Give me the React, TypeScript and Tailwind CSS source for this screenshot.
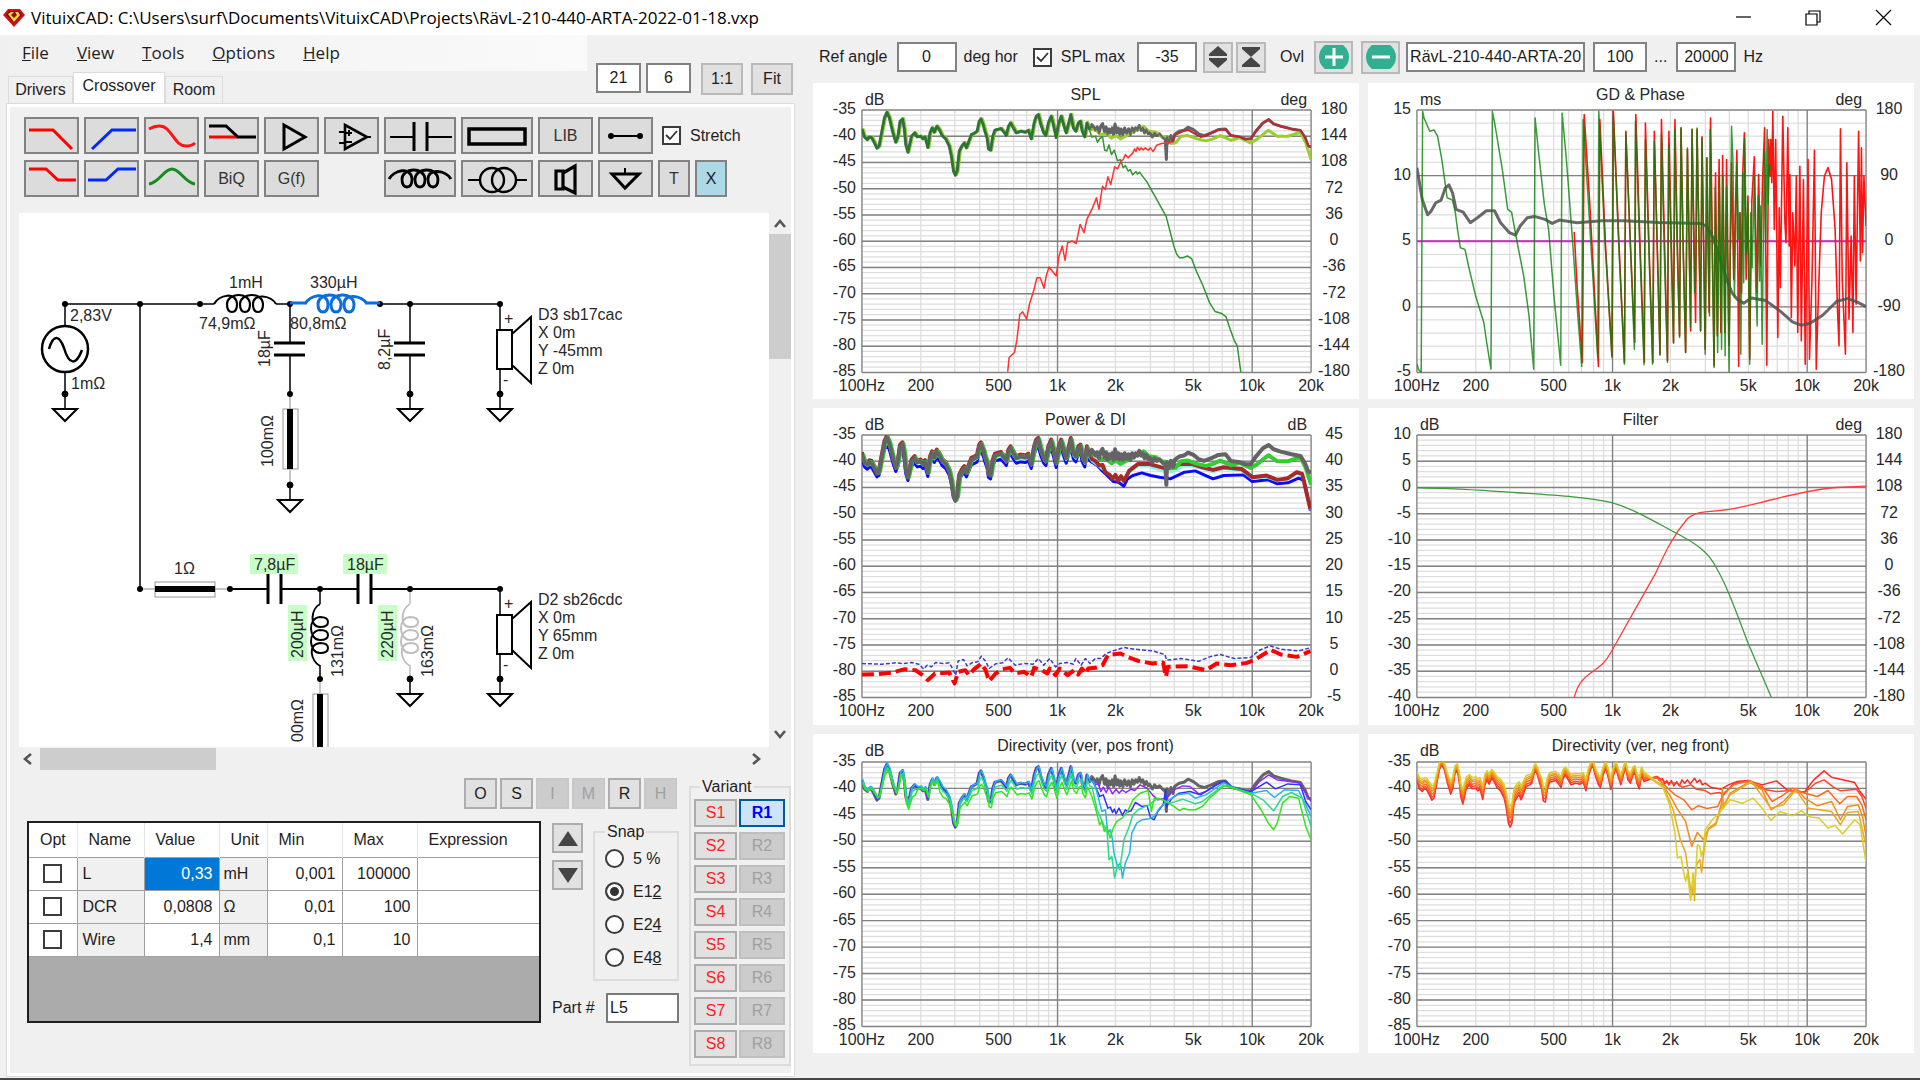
import { useState, type ReactNode } from "react";

type Point = [number, number];

interface Series {
  d: string;
  color: string;
  width?: number;
  dash?: string;
  opacity?: number;
}

interface ChartProps {
  title: string;
  leftUnit: string;
  rightUnit?: string;
  left: number[];
  right?: number[];
  minor: number;
  tall?: boolean;
  box: string;
  series: Series[];
}

// Low frequency part that every on-axis response shares
const BASS =
  "145 148 152 172 160 180 166 172 172 174 180 190 187 206 193 200 200 160 208 115 215 98 222 115 232 160 240 188 246 170 252 125 259 118 264 150 268 195 274 218 280 190 284 170 293 160 300 172 310 170 316 178 322 172 330 204 336 160 342 145 348 158 355 140 362 150 370 168 380 178 390 200 396 230 402 275 407 287 412 275 418 215 425 200 432 190 438 205 445 185 452 165 462 160 468 155 474 125 479 118 485 135 490 155 496 175 500 208 506 212 512 170 518 152 535 147 545 160 550 168 556 140 562 130 570 145 578 160 590 155 604 158 612 152 620 178 628 130 634 110 640 105 647 135 655 160 661 168 668 130 676 110 682 135 690 174 696 135 704 110 712 140 718 160 724 135 731 105 738 145 745 155 752 130 758 125 763 155 770 172 776 130 783 150";

const TREBLE =
  "785 150 790 135 795 142 800 152 805 142 810 160 815 140 820 132 826 158 830 142 834 165 838 148 842 160 847 145 851 165 855 133 860 160 864 145 868 164 872 148 877 165 882 145 888 162 893 148 898 165 903 145 908 158 913 145 918 152 923 138 928 152 933 145 938 160 943 150 948 162 952 158 960 172 966 160 972 168 980 163 990 175 996 178 999 240 1001 172 1006 190 1012 168 1018 186 1022 165 1035 155 1048 152 1060 143 1075 150 1090 163 1105 168 1125 160 1145 150 1165 148 1180 168 1205 172 1220 178 1236 178 1250 155 1270 130 1286 120 1300 133 1320 140 1350 148 1375 153 1388 175 1397 200 1405 202";

const LISTENING =
  "785 150 800 150 815 165 830 162 845 176 858 168 870 178 885 170 900 160 915 152 935 140 950 155 970 158 985 170 1000 172 1012 192 1025 190 1040 170 1060 168 1085 178 1110 184 1130 178 1150 168 1180 182 1205 175 1235 190 1255 178 1285 152 1310 170 1340 170 1375 158 1390 190 1405 240";

const parse = (s: string): Point[] => {
  const n = s.split(" ").map(Number);
  const out: Point[] = [];
  for (let i = 0; i < n.length; i += 2) out.push([n[i], n[i + 1]]);
  return out;
};

const line = (...parts: string[]) => "M" + parts.join(" L");

// Moves a trace, drops it by `sag` above the 400 Hz area and scales its ripple by `gain`
const shift = (s: string, dx: number, dy: number, sag = 0, gain = 1) =>
  parse(s)
    .map(([x, y]) => {
      const extra = x > 360 || (x > 260 && x < 300) ? sag : 0;
      return `${x + dx} ${Math.round(150 + (y - 150) * gain) + dy + extra}`;
    })
    .join(" ");

const range = (from: number, to: number, step: number) => {
  const out: number[] = [];
  for (let v = from; step > 0 ? v <= to : v >= to; v += step) out.push(v);
  return out;
};

const DB = range(-35, -85, -5);
const DEG = range(180, -180, -36);
const FREQ: [number, string][] = [
  [100, "100Hz"],
  [200, "200"],
  [500, "500"],
  [1000, "1k"],
  [2000, "2k"],
  [5000, "5k"],
  [10000, "10k"],
  [20000, "20k"],
];
const FREQ_LINES = [...range(200, 900, 100), ...range(2000, 9000, 1000)];

const CHARTS: ChartProps[] = [
  {
    title: "SPL",
    leftUnit: "dB",
    rightUnit: "deg",
    left: DB,
    right: DEG,
    minor: 50,
    box: "145 91 1260 789",
    series: [
      { d: line(shift(TREBLE, 0, 0)), color: "#646464", width: 3 },
      { d: line(shift(BASS, 3, -1), LISTENING), color: "#9acd32", width: 3 },
      { d: line(BASS), color: "#646464", width: 3 },
      { d: line(TREBLE), color: "#646464", width: 2 },
      { d: line(BASS), color: "#1e7d28", width: 2 },
      {
        d: line(
          "783 150 790 172 800 170 806 188 813 176 820 172 826 212 832 214 838 196 845 225 853 212 862 244 870 240 878 265 884 258 892 275 898 270 904 286 914 276 918 284 924 278 932 290 945 308 956 330 968 352 985 385 998 410 1008 450 1020 500 1028 525 1036 535 1046 535 1058 530 1070 538 1085 580 1102 620 1120 670 1136 697 1152 702 1166 712 1178 750 1190 785 1198 800 1208 880"
        ),
        color: "#329632",
        width: 1.5,
      },
      {
        d: line(
          "554 878 558 835 573 820 580 780 588 705 596 698 607 720 615 675 628 630 636 595 645 595 656 627 662 590 670 563 690 590 698 530 707 500 715 543 722 490 735 485 746 493 757 435 768 460 776 420 790 390 803 355 810 390 820 320 828 330 835 292 843 315 854 262 862 268 872 245 878 240 884 225 892 235 905 220 910 208 914 216 918 203 924 212 928 205 934 211 940 205 948 212 954 205 962 216 972 197 985 192 1000 190 1013 188"
        ),
        color: "#ff3232",
        width: 1.5,
      },
      {
        d: line(
          "1013 188 1025 165 1045 155 1060 151 1080 163 1095 172 1107 170 1125 161 1145 151 1165 149 1180 168 1205 172 1220 180 1236 177 1250 155 1270 130 1286 120 1300 133 1320 140 1350 148 1375 152 1388 172 1397 198 1405 202"
        ),
        color: "#be2832",
        width: 2,
      },
    ],
  },
  {
    title: "GD & Phase",
    leftUnit: "ms",
    rightUnit: "deg",
    left: range(15, -5, -5),
    right: range(180, -180, -90),
    minor: 20,
    box: "160 91 1262 789",
    series: [
      { d: "M160 486H1422", color: "#c832c8", width: 2 },
      {
        d: line(
          "602 458 610 620 625 850 630 105 645 360 670 862 674 120 690 500 708 830 712 95 728 500 743 850 747 155 760 500 772 790 775 105 787 500 799 850 802 130 812 500 823 850 827 155 835 500 843 825 847 120 856 500 864 845 868 155 875 500 881 790 885 120 892 500 898 770 902 145 908 500 915 820 920 210 925 500 929 755 933 150 943 730 947 150 957 755 961 172 970 810 974 235 981 700 985 115 995 860 999 280 1004 770 1009 240 1014 760 1019 228 1025 760 1030 240 1037 800 1044 250 1050 600 1059 212 1064 862 1068 400 1072 640 1076 265 1080 160 1085 600 1090 350 1095 840 1101 365 1108 232 1115 640 1120 285 1126 560 1131 305 1137 145 1143 858 1148 180 1152 290 1154 180 1157 310 1160 95 1164 450 1168 180 1174 775 1178 385 1181 625 1188 110 1194 430 1197 490 1202 145 1206 500 1208 285 1212 715 1216 400 1222 560 1226 290 1230 760 1236 260 1240 785 1246 300 1251 855 1259 240 1263 840 1270 600 1277 212 1282 870 1288 650 1296 400 1305 290 1315 264 1325 300 1335 450 1342 700 1346 800 1350 148 1355 600 1364 825 1368 250 1374 720 1380 470 1385 760 1389 290 1394 675 1401 155 1406 545 1409 205 1412 520 1416 290 1422 440"
        ),
        color: "#ff1414",
        width: 1.6,
      },
      {
        d: line(
          "160 265 175 360 190 406 200 395 213 370 228 362 240 325 250 316 260 340 270 390 290 398 310 430 330 415 355 394 378 394 395 430 420 460 437 467 450 440 470 415 490 411 520 420 540 432 560 422 610 430 680 424 740 424 840 429 960 432 975 442 990 470 1010 530 1030 600 1045 640 1060 660 1078 672 1100 656 1140 664 1180 695 1215 728 1240 738 1265 732 1300 708 1340 666 1370 658 1395 667 1422 682"
        ),
        color: "#505050",
        width: 3,
        opacity: 0.85,
      },
      {
        d: line(
          "160 855 165 872 172 880 176 95 180 115 196 155 208 151 218 170 230 240 245 355 260 362 268 400 274 450 282 505 295 510 305 560 325 650 348 730 356 790 368 870 372 95 380 140 400 270 415 390 426 398 440 480 460 590 475 710 488 870 492 115 500 200 518 375 530 450 545 650 564 858 568 100 580 240 597 480 610 680 623 862 627 120 640 340 668 835 671 95 688 480 708 835 712 110 728 520 743 855 747 160 760 500 771 810 774 125 786 500 798 857 802 180 812 520 822 855 827 185 836 520 843 828 847 165 855 520 864 850 867 200 874 500 881 792 884 150 891 500 898 775 902 145 908 500 915 820 920 205 925 500 929 745 933 148 940 640 943 600 947 145 957 755 961 175 970 825 975 235 982 710 984 150 995 865 998 325 1005 820 1010 290 1016 810 1020 290 1026 830 1030 320 1037 878 1044 140 1048 250 1052 655 1059 250 1064 480 1067 400 1070 825 1075 280 1078 610 1081 175 1086 520 1090 370 1095 855 1098 400 1102 565 1108 290 1112 620 1116 740 1119 350 1123 605 1125 380 1130 795 1136 215 1140 490 1144 150 1147 375 1150 255 1153 270"
        ),
        color: "#0a820a",
        width: 1.5,
        opacity: 0.8,
      },
    ],
  },
  {
    title: "Power & DI",
    leftUnit: "dB",
    rightUnit: "dB",
    left: DB,
    right: range(45, -5, -5),
    minor: 50,
    box: "145 108 1260 789",
    series: [
      {
        d: line(
          shift(BASS, 0, 34, 0, 0.9),
          "790 190 805 200 820 217 835 232 850 248 865 250 880 262 890 240 905 230 930 222 955 230 980 235 1010 240 1050 220 1080 216 1130 240 1160 230 1215 228 1240 248 1285 243 1310 255 1340 252 1370 238 1385 245 1403 335"
        ),
        color: "#0a0aff",
        width: 3,
      },
      {
        d: line(
          shift(BASS, 0, 25, 0, 0.9),
          "790 188 820 212 850 240 880 245 895 222 920 202 950 203 1000 222 1020 218 1045 203 1070 203 1100 210 1130 220 1160 210 1210 216 1240 240 1280 236 1310 247 1340 242 1365 224 1380 232 1392 284 1403 332"
        ),
        color: "#78f5f5",
        width: 2,
      },
      {
        d: line(
          shift(BASS, 0, 12),
          "790 180 800 186 810 200 820 198 828 220 840 228 848 240 856 228 864 246 872 232 880 246 895 215 920 195 950 195 1000 210 1040 195 1070 195 1100 205 1130 213 1160 205 1210 210 1240 235 1280 230 1310 243 1340 238 1365 220 1380 225 1392 280 1403 330"
        ),
        color: "#a52a2a",
        width: 4,
      },
      { d: line(shift(BASS, 3, 17), shift(LISTENING, 0, 17)), color: "#32cd32", width: 4 },
      { d: line(shift(BASS, 0, 18), shift(TREBLE, 0, 18)), color: "#646464", width: 4 },
      {
        d: line(
          "145 795 200 797 240 793 260 795 285 792 305 797 318 812 328 800 340 805 352 792 372 795 390 793 400 812 408 830 415 787 430 783 440 802 455 792 470 790 480 773 492 788 502 810 520 796 540 793 555 778 575 800 600 795 625 797 640 780 655 800 672 780 688 805 700 795 720 792 738 797 745 780 760 800 772 780 785 795 800 780 815 780 830 765 850 757 880 747 910 752 960 757 995 768 1000 785 1040 780 1090 788 1120 775 1150 768 1190 780 1235 777 1260 755 1290 742 1320 752 1370 757 1405 747"
        ),
        color: "#3c3cc8",
        width: 1.5,
        dash: "4 2",
      },
      {
        d: line(
          "145 828 190 827 230 822 265 812 295 815 315 830 330 845 350 825 390 822 405 855 415 820 435 815 445 830 460 812 480 795 492 815 502 848 520 825 540 812 560 808 575 825 600 820 620 835 628 808 650 815 665 825 672 810 688 830 700 810 722 830 740 815 752 828 762 810 772 825 780 810 800 808 820 800 835 770 870 765 890 775 920 787 960 795 990 792 998 835 1003 805 1060 803 1110 815 1140 795 1180 800 1225 793 1250 782 1292 754 1320 768 1365 775 1403 758"
        ),
        color: "#ff0000",
        width: 4,
        dash: "12 5",
      },
    ],
  },
  {
    title: "Filter",
    leftUnit: "dB",
    rightUnit: "deg",
    left: range(10, -40, -5),
    right: DEG,
    minor: 50,
    box: "160 108 1262 789",
    series: [
      {
        d: "M602 897C610 865 620 845 650 822C680 800 690 790 705 762C740 695 790 600 830 525C860 455 880 410 920 360C935 345 950 341 970 339C1060 332 1090 320 1160 302C1230 283 1290 270 1340 266L1422 262",
        color: "#ff3c3c",
      },
      {
        d: "M160 267C250 268 330 273 420 280C560 290 640 295 705 311C770 330 830 370 892 405C950 438 980 462 1000 505C1030 560 1050 620 1092 738L1156 897",
        color: "#3c9b3c",
      },
    ],
  },
  {
    title: "Directivity (ver, pos front)",
    leftUnit: "dB",
    left: DB,
    minor: 50,
    tall: true,
    box: "145 96 1260 796",
    series: [
      { d: line(shift(BASS, 0, 5), shift(TREBLE, 0, 5)), color: "#646464", width: 3 },
      {
        d: line(
          shift(BASS, 0, 4),
          "790 150 800 165 808 160 815 185 822 172 830 188 838 172 848 192 858 178 866 190 875 180 885 188 900 178 910 182 925 165 945 175 960 195 975 210 1000 205 1020 180 1045 168 1065 170 1090 192 1110 185 1140 165 1160 155 1185 175 1236 188 1260 155 1286 135 1310 150 1370 158 1390 190 1405 215"
        ),
        color: "#8c28ff",
        width: 1.5,
      },
      {
        d: line(
          shift(BASS, 0, 2, 3),
          "790 150 800 170 812 200 822 195 835 235 842 232 848 248 853 238 858 252 866 235 876 257 884 240 892 246 900 243 912 218 930 230 945 228 955 265 965 270 975 245 990 225 997 180 1000 230 1015 205 1035 190 1065 185 1095 195 1130 170 1160 153 1190 175 1236 185 1280 157 1305 177 1340 162 1375 165 1390 215 1405 240"
        ),
        color: "#3232ff",
        width: 1.5,
      },
      {
        d: line(
          shift(BASS, 2, -1, 4, 0.95),
          "795 155 805 190 818 245 828 240 835 310 842 300 848 330 852 370 862 410 870 400 876 445 884 400 896 370 902 310 916 280 930 270 950 267 965 260 980 235 1000 215 1030 195 1060 190 1080 205 1110 195 1160 158 1190 175 1236 190 1280 182 1302 203 1330 180 1370 182 1390 225 1405 260"
        ),
        color: "#28b4e6",
        width: 1.5,
      },
      {
        d: line(
          shift(BASS, 2, 7, 12, 0.85),
          "790 170 805 240 825 290 833 310 838 390 846 380 854 445 862 405 868 420 875 370 880 330 895 290 905 255 920 240 950 225 975 205 1010 220 1045 208 1080 222 1100 215 1160 165 1190 176 1236 190 1270 210 1300 243 1325 200 1350 188 1380 205 1405 290"
        ),
        color: "#28dc8c",
        width: 1.5,
      },
      {
        d: line(
          shift(BASS, 2, 11, 26, 0.75),
          "790 200 800 235 812 285 818 275 825 305 832 290 841 325 850 295 860 275 875 265 890 245 905 210 925 190 948 182 957 245 965 205 990 210 1020 230 1035 242 1048 236 1060 240 1080 240 1100 230 1120 205 1160 168 1190 176 1236 195 1265 240 1285 280 1300 300 1310 280 1325 220 1345 200 1370 205 1390 290 1405 330"
        ),
        color: "#32e61e",
        width: 1.5,
      },
    ],
  },
  {
    title: "Directivity (ver, neg front)",
    leftUnit: "dB",
    left: DB,
    minor: 50,
    tall: true,
    box: "160 96 1262 796",
    series: [
      {
        d: line(
          shift(BASS, 15, 5),
          "835 140 842 152 850 146 856 162 862 152 868 165 875 152 882 168 890 155 897 168 905 150 912 160 920 150 928 162 940 145 947 158 955 150 962 165 970 160 985 172 1015 178 1035 165 1060 155 1090 152 1130 165 1170 153 1200 180 1236 188 1250 185 1275 150 1304 123 1325 142 1390 158 1405 185 1422 208"
        ),
        color: "#ff2828",
        width: 1.5,
      },
      {
        d: line(
          shift(BASS, 15, -1, 0, 0.95),
          "835 140 860 158 890 160 905 172 930 165 945 178 970 182 985 192 1010 188 1022 195 1050 160 1090 155 1140 180 1170 185 1210 182 1250 188 1280 160 1304 150 1330 172 1350 183 1395 178 1410 200 1422 235"
        ),
        color: "#ff4628",
        width: 1.5,
      },
      {
        d: line(
          shift(BASS, 15, -7, 0, 0.89),
          "835 145 860 170 885 195 910 210 932 240 950 228 975 236 1005 230 1022 190 1050 165 1095 152 1130 170 1158 215 1190 195 1215 175 1250 190 1285 200 1315 182 1348 222 1370 200 1395 200 1410 225 1422 270"
        ),
        color: "#fa6e1e",
        width: 1.5,
      },
      {
        d: line(
          shift(BASS, 15, -13, 0, 0.84),
          "850 165 870 195 890 235 915 275 932 350 948 308 965 330 980 295 1000 280 1015 225 1018 175 1021 235 1040 190 1095 155 1130 180 1155 240 1190 215 1225 175 1250 205 1285 228 1325 215 1350 270 1370 230 1400 225 1412 260 1422 320"
        ),
        color: "#f08c1e",
        width: 1.5,
      },
      {
        d: line(
          shift(BASS, 15, -18, 0, 0.8),
          "855 175 880 240 900 330 915 370 925 450 932 500 938 460 940 513 943 420 948 400 955 390 960 428 968 350 978 300 1000 285 1015 235 1040 195 1100 155 1155 235 1190 225 1225 180 1260 235 1325 245 1350 285 1370 248 1400 245 1422 350"
        ),
        color: "#e6aa1e",
        width: 1.5,
      },
      {
        d: line(
          shift(BASS, 15, -24, 0, 0.76),
          "850 170 870 225 885 310 892 385 902 380 910 430 915 455 920 430 929 512 936 430 940 490 948 345 955 350 959 380 965 360 970 300 990 270 1005 255 1020 235 1040 210 1075 220 1105 205 1130 235 1155 272 1180 245 1215 258 1240 243 1265 262 1290 265 1315 295 1335 287 1356 313 1390 270 1405 285 1422 400"
        ),
        color: "#dccd28",
        width: 1.5,
      },
    ],
  },
];

const PLOT_X = 49;
const PLOT_W = 450;

function Chart({ title, leftUnit, rightUnit, left, right, minor, tall, box, series }: ChartProps) {
  const top = tall ? 28 : 27;
  const height = tall ? 265 : 263;
  const bottom = top + height;
  const fx = (f: number) => Math.round(PLOT_X + (Math.log10(f / 100) / Math.log10(200)) * PLOT_W);
  const ly = (i: number, count: number) => top + (height * i) / count;

  return (
    <figure className="bg-white">
      <svg
        viewBox={`0 0 547 ${tall ? 320 : 317}`}
        className="block w-full fill-[#282828] text-[16px]"
        role="img"
        aria-label={title}
      >
        <g stroke="#dedede" strokeWidth="1.3">
          {range(1, minor - 1, 1).map((i) => (
            <line key={i} x1={PLOT_X} x2={PLOT_X + PLOT_W} y1={ly(i, minor)} y2={ly(i, minor)} />
          ))}
          {FREQ_LINES.map((f) => (
            <line key={f} x1={fx(f)} x2={fx(f)} y1={top} y2={bottom} />
          ))}
        </g>
        <g stroke="#828282" strokeWidth="1.4">
          {left.map((v, i) => (
            <line
              key={v}
              x1={PLOT_X}
              x2={PLOT_X + PLOT_W}
              y1={ly(i, left.length - 1)}
              y2={ly(i, left.length - 1)}
            />
          ))}
          {[100, 1000, 10000, 20000].map((f) => (
            <line key={f} x1={fx(f)} x2={fx(f)} y1={top} y2={bottom} />
          ))}
        </g>
        <svg x={PLOT_X} y={top} width={PLOT_W} height={height} viewBox={box} preserveAspectRatio="none">
          {series.map((s, i) => (
            <path
              key={i}
              d={s.d}
              fill="none"
              stroke={s.color}
              strokeWidth={s.width ?? 1.3}
              strokeDasharray={s.dash}
              strokeLinejoin="round"
              opacity={s.opacity}
              vectorEffect="non-scaling-stroke"
            />
          ))}
        </svg>
        <text x="273" y="17" textAnchor="middle">
          {title}
        </text>
        <text x="52" y="22">
          {leftUnit}
        </text>
        {rightUnit && (
          <text x="495" y="22" textAnchor="end">
            {rightUnit}
          </text>
        )}
        {left.map((v, i) => (
          <text key={v} x="43" y={ly(i, left.length - 1) + 4} textAnchor="end">
            {v}
          </text>
        ))}
        {right?.map((v, i) => (
          <text key={v} x="522" y={ly(i, right.length - 1) + 4} textAnchor="middle">
            {v}
          </text>
        ))}
        {FREQ.map(([f, label]) => (
          <text key={f} x={fx(f)} y={bottom + 19} textAnchor="middle">
            {label}
          </text>
        ))}
      </svg>
    </figure>
  );
}

const COIL =
  "M0 0C5 -9 22 -13 23 0C23 5 21 8 18 8C15 8 13 5 13 0C13 -11 35 -13 36 0C36 5 34 8 31 8C28 8 26 5 26 0C26 -11 48 -13 49 0C49 5 47 8 44 8C41 8 39 5 39 0C39 -11 57 -9 62 0";

function Dot({ x, y }: { x: number; y: number }) {
  return <circle cx={x} cy={y} r="3" fill="#000" />;
}

function Ground({ x, y }: { x: number; y: number }) {
  return (
    <g fill="none" stroke="#000">
      <path d={`M${x} ${y}V${y + 14}`} strokeWidth="1.5" />
      <path d={`M${x - 12} ${y + 15}H${x + 12}L${x} ${y + 27}Z`} strokeWidth="2" />
      <Dot x={x} y={y} />
    </g>
  );
}

function Speaker({ y, lines }: { y: number; lines: string[] }) {
  return (
    <g>
      <path d={`M500 ${y}V${y + 90}`} stroke="#000" strokeWidth="1.5" />
      <rect x="497" y={y + 26} width="15" height="39" fill="#fff" stroke="#000" strokeWidth="2" />
      <path d={`M512 ${y + 30}L531 ${y + 13}V${y + 79}L512 ${y + 61}`} fill="none" stroke="#000" strokeWidth="2" />
      <text x="504" y={y + 20}>
        +
      </text>
      <text x="503" y={y + 81}>
        -
      </text>
      {lines.map((t, i) => (
        <text key={t} x="538" y={y + 16 + i * 18}>
          {t}
        </text>
      ))}
      <Dot x={500} y={y} />
      <Ground x={500} y={y + 90} />
    </g>
  );
}

function VText({ x, y, children }: { x: number; y: number; children: ReactNode }) {
  return <text transform={`translate(${x} ${y}) rotate(-90)`}>{children}</text>;
}

function Schematic() {
  return (
    <svg
      viewBox="19 213 750 534"
      className="block min-w-0 flex-1 bg-white fill-[#282828] text-[16px]"
      role="img"
      aria-label="Crossover schematic"
    >
      {/* Woofer branch */}
      <g fill="none" stroke="#000" strokeWidth="1.5">
        <path d="M65 326V304H214M276 304H290M380 304H500M140 304V589M65 372V394M290 304V342M290 355V394M410 304V342M410 355V394" />
        <path d="M274 343H305M274 355H305M394 343H425M394 355H425" strokeWidth="3" />
        <circle cx="65" cy="349" r="23" strokeWidth="2.5" />
        <path d="M49 349C53 335 59 334 64 348C69 365 76 366 82 350" strokeWidth="2.5" />
        <path d={COIL} transform="translate(214 304)" strokeWidth="2.2" />
        <path d="M290 394V409M290 470V485" stroke="#b4b4b4" />
        <rect x="283" y="409" width="15" height="60" stroke="#969696" strokeWidth="1" />
        <path d="M290 409V469" strokeWidth="6" />
      </g>
      <Ground x={290} y={485} />
      <Ground x={65} y={394} />
      <Ground x={410} y={394} />
      <Dot x={65} y={304} />
      <Dot x={140} y={304} />
      <Dot x={200} y={304} />
      <Dot x={290} y={304} />
      <Dot x={290} y={394} />
      <Dot x={380} y={304} />
      <Dot x={410} y={304} />
      <g fill="none" stroke="#0a6edc" strokeWidth="3">
        <path d="M290 303H306M366 303H380" />
        <path d={COIL} transform="translate(305 304)" />
      </g>
      <text x="70" y="321">2,83V</text>
      <text x="71" y="389">1mΩ</text>
      <text x="229" y="288">1mH</text>
      <text x="310" y="288">330µH</text>
      <text x="199" y="329">74,9mΩ</text>
      <text x="290" y="329">80,8mΩ</text>
      <VText x={270} y={367}>18µF</VText>
      <VText x={390} y={370}>8,2µF</VText>
      <VText x={273} y={467}>100mΩ</VText>
      <Speaker y={304} lines={["D3 sb17cac", "X 0m", "Y -45mm", "Z 0m"]} />

      {/* Tweeter branch */}
      <g fill="#c8ffc8">
        <rect x="250" y="554" width="48" height="20" />
        <rect x="343" y="554" width="44" height="20" />
        <rect x="288" y="605" width="19" height="56" />
        <rect x="378" y="605" width="19" height="56" />
      </g>
      <g fill="none" stroke="#000" strokeWidth="2">
        <path d="M230 589H268M281 589H358M371 589H500" />
        <path d="M268 574V604M281 574V604M358 574V604M371 574V604" strokeWidth="3" />
        <path d="M320 589V604M320 665V679" strokeWidth="1.5" />
        <path d={COIL} transform="translate(320 666) rotate(-90)" />
        <path d="M410 589V604M410 665V679" stroke="#bebebe" strokeWidth="1.5" />
        <path d={COIL} transform="translate(410 666) rotate(-90)" stroke="#bebebe" />
        <path d="M140 589H155M215 589H230M320 679V694" stroke="#b4b4b4" strokeWidth="1.5" />
        <rect x="155" y="582" width="60" height="15" stroke="#969696" strokeWidth="1" />
        <path d="M155 589H215" strokeWidth="6" />
        <rect x="313" y="694" width="15" height="60" stroke="#969696" strokeWidth="1" />
        <path d="M320 694V754" strokeWidth="6" />
      </g>
      <Dot x={140} y={589} />
      <Dot x={230} y={589} />
      <Dot x={320} y={589} />
      <Dot x={320} y={679} />
      <Dot x={410} y={589} />
      <Ground x={410} y={679} />
      <text x="174" y="574">1Ω</text>
      <text x="254" y="570">7,8µF</text>
      <text x="347" y="570">18µF</text>
      <VText x={303} y={658}>200µH</VText>
      <VText x={393} y={658}>220µH</VText>
      <VText x={343} y={677}>131mΩ</VText>
      <VText x={433} y={677}>163mΩ</VText>
      <VText x={303} y={742}>00mΩ</VText>
      <Speaker y={589} lines={["D2 sb26cdc", "X 0m", "Y 65mm", "Z 0m"]} />
    </svg>
  );
}

function Tool({ label, wide, children }: { label: string; wide?: boolean; children: ReactNode }) {
  return (
    <button
      aria-label={label}
      className={`flex h-[37px] shrink-0 items-center justify-center border-2 border-[#828282] bg-[#dcdcdc] text-[#323232] ${
        wide ? "w-[72px]" : "w-[55px]"
      }`}
    >
      {children}
    </button>
  );
}

function Icon({ wide, children }: { wide?: boolean; children: ReactNode }) {
  return (
    <svg
      viewBox={wide ? "2 2 68 33" : "2 2 51 33"}
      className="h-full w-full"
      fill="none"
      stroke="#000"
      strokeWidth="3"
    >
      {children}
    </svg>
  );
}

function Toolbar() {
  const [stretch, setStretch] = useState(true);

  return (
    <div className="flex flex-col gap-[6px] pt-[10px] pl-[14px]">
      <div className="flex gap-[5px]">
        <Tool label="Low pass">
          <Icon><path d="M5 13H29L48 32" stroke="#f00" /></Icon>
        </Tool>
        <Tool label="High pass">
          <Icon><path d="M8 32L28 13H52" stroke="#0028ff" /></Icon>
        </Tool>
        <Tool label="Shelf">
          <Icon><path d="M5 12C12 8 19 8 23 12C31 20 33 29 42 29C46 29 49 28 51 26" stroke="#ff1414" /></Icon>
        </Tool>
        <Tool label="Shelving low pass">
          <Icon>
            <path d="M5 20H34" stroke="#f00" />
            <path d="M5 9H22L34 20H52" />
          </Icon>
        </Tool>
        <Tool label="Buffer">
          <Icon><path d="M20 8V32L41 20Z" /></Icon>
        </Tool>
        <Tool label="Op-amp">
          <Icon>
            <path d="M21 8V32L43 20Z" strokeWidth="2.6" />
            <path d="M43 20H47M15 15H21M15 26H21M22 16H28M25 13V19M22 25H28" strokeWidth="2" />
          </Icon>
        </Tool>
        <Tool label="Capacitor" wide>
          <Icon wide>
            <path d="M6 20H30M43 20H68" strokeWidth="2" />
            <path d="M30 5V34M43 5V34" />
          </Icon>
        </Tool>
        <Tool label="Resistor" wide>
          <Icon wide><rect x="8" y="12" width="56" height="15" strokeWidth="3.5" /></Icon>
        </Tool>
        <Tool label="LIB">LIB</Tool>
        <Tool label="Wire">
          <Icon>
            <path d="M13 19H42" strokeWidth="2" />
            <circle cx="13" cy="19" r="1.5" />
            <circle cx="42" cy="19" r="1.5" />
          </Icon>
        </Tool>
        <label className="ml-1 flex items-center gap-[9px]">
          <Check checked={stretch} onChange={setStretch} />
          Stretch
        </label>
      </div>
      <div className="flex gap-[5px]">
        <Tool label="Low shelf">
          <Icon><path d="M5 9H22L34 20H52" stroke="#f00" /></Icon>
        </Tool>
        <Tool label="High shelf">
          <Icon><path d="M4 20H22L34 9H52" stroke="#0028ff" /></Icon>
        </Tool>
        <Tool label="Peak">
          <Icon><path d="M5 24C15 23 20 9 28 9C36 9 41 23 51 24" stroke="#148c1e" /></Icon>
        </Tool>
        <Tool label="BiQ">BiQ</Tool>
        <Tool label="G(f)">G(f)</Tool>
        <span className="w-[55px] shrink-0" />
        <Tool label="Inductor" wide>
          <Icon wide><path d={COIL} transform="translate(5 19)" strokeWidth="2.8" /></Icon>
        </Tool>
        <Tool label="Transformer" wide>
          <Icon wide>
            <path d="M7 20H19M55 20H66" strokeWidth="2" />
            <circle cx="31" cy="20" r="12" strokeWidth="2.4" />
            <circle cx="43" cy="20" r="12" strokeWidth="2.4" />
          </Icon>
        </Tool>
        <Tool label="Driver">
          <Icon><path d="M18 11H25V29H18ZM25 13L37 6V33L25 27" strokeWidth="3.2" /></Icon>
        </Tool>
        <Tool label="Ground">
          <Icon>
            <path d="M27 8V13" strokeWidth="2" />
            <path d="M14 14H41L27 28Z" />
          </Icon>
        </Tool>
        <button className="w-8 border-2 border-[#828282] bg-[#dcdcdc] text-[#323232]">T</button>
        <button className="w-8 border-2 border-[#828282] bg-[#add8e6]">X</button>
      </div>
    </div>
  );
}

function Check({ checked, onChange, label }: { checked: boolean; onChange: (v: boolean) => void; label?: string }) {
  return (
    <span className="relative block h-[19px] w-[19px] shrink-0">
      <input
        type="checkbox"
        aria-label={label}
        checked={checked}
        onChange={(e) => onChange(e.target.checked)}
        className="block h-[19px] w-[19px] appearance-none border-2 border-[#3c3c3c] bg-white"
      />
      {checked && (
        <svg viewBox="0 0 19 19" className="pointer-events-none absolute inset-0" fill="none" stroke="#323232" strokeWidth="1.8">
          <path d="M4 9L8 13L15 5" />
        </svg>
      )}
    </span>
  );
}

function Chevron({ d, label, className }: { d: string; label: string; className: string }) {
  return (
    <button aria-label={label} className={`flex items-center justify-center ${className}`}>
      <svg viewBox="0 0 12 12" className="h-3 w-3" fill="none" stroke="#555" strokeWidth="2.6">
        <path d={d} />
      </svg>
    </button>
  );
}

const ROWS = [
  ["L", "0,33", "mH", "0,001", "100000"],
  ["DCR", "0,0808", "Ω", "0,01", "100"],
  ["Wire", "1,4", "mm", "0,1", "10"],
];

function PartTable() {
  const [opt, setOpt] = useState([false, false, false]);

  return (
    <div className="min-w-0 flex-1 self-stretch border-2 border-[#1e1e1e] bg-[#ababab]">
      <table className="w-full table-fixed border-collapse">
        <colgroup>
          <col className="w-[48px]" />
          <col className="w-[67px]" />
          <col className="w-[75px]" />
          <col className="w-[48px]" />
          <col className="w-[75px]" />
          <col className="w-[75px]" />
          <col />
        </colgroup>
        <thead>
          <tr className="h-[34px] border-b border-[#a0a0a0] bg-white text-left">
            {["Opt", "Name", "Value", "Unit", "Min", "Max", "Expression"].map((h) => (
              <th key={h} className="border-r border-[#e5e5e5] px-[11px] font-normal last:border-r-0">
                {h}
              </th>
            ))}
          </tr>
        </thead>
        <tbody>
          {ROWS.map(([name, value, unit, min, max], i) => (
            <tr key={name} className="h-[33px] border-b border-[#a0a0a0] bg-white [&>td]:border-r [&>td]:border-[#a0a0a0]">
              <td className="pl-[14px]">
                <Check
                  label={`Optimize ${name}`}
                  checked={opt[i]}
                  onChange={(v) => setOpt(opt.map((o, k) => (k === i ? v : o)))}
                />
              </td>
              <td className="bg-[#f0f0f0] pl-[5px]">{name}</td>
              <td className={`pr-[6px] text-right ${i === 0 ? "bg-[#0078d7] text-white" : ""}`}>{value}</td>
              <td className="bg-[#f0f0f0] pl-1">{unit}</td>
              <td className="pr-[6px] text-right">{min}</td>
              <td className="pr-[6px] text-right">{max}</td>
              <td className="last:border-r-0" />
            </tr>
          ))}
        </tbody>
      </table>
    </div>
  );
}

function PartEditor() {
  const [snap, setSnap] = useState("E12");
  const [variant, setVariant] = useState("R1");

  return (
    <div className="flex gap-[10px] pt-2 pl-[17px]">
      <div className="flex min-w-0 flex-1 flex-col gap-3">
        <div className="flex justify-end gap-[3px] pr-[2px]">
          {["O", "S", "I", "M", "R", "H"].map((k) => (
            <button
              key={k}
              disabled={"IMH".includes(k)}
              className="h-[31px] w-[33px] border-2 border-[#adadad] bg-[#e1e1e1] disabled:border-[#c8c8c8] disabled:bg-[#cccccc] disabled:text-[#a0a0a0]"
            >
              {k}
            </button>
          ))}
        </div>
        <div className="flex items-start gap-[11px]">
          <PartTable />
          <div className="flex flex-col gap-3 pt-[2px]">
            <div className="flex gap-[10px]">
              <div className="flex flex-col gap-[7px]">
                {["Increase value", "Decrease value"].map((label, i) => (
                  <button
                    key={label}
                    aria-label={label}
                    className="flex h-[30px] w-[31px] items-center justify-center border-2 border-[#adadad] bg-[#e1e1e1]"
                  >
                    <svg viewBox="0 0 20 15" className="h-[15px] w-5" fill="#464646">
                      <path d={i ? "M0 0H20L10 15Z" : "M0 15H20L10 0Z"} />
                    </svg>
                  </button>
                ))}
              </div>
              <fieldset className="w-[86px] border-2 border-[#dcdcdc] px-[10px] pt-[1px] pb-[5px]">
                <legend className="px-[2px] leading-[18px]">Snap</legend>
                {[
                  ["5 %", ""],
                  ["E1", "2"],
                  ["E2", "4"],
                  ["E4", "8"],
                ].map(([head, key]) => (
                  <label key={head} className="flex h-[33px] items-center gap-[9px] whitespace-nowrap">
                    <input
                      type="radio"
                      name="snap"
                      checked={snap === head + key}
                      onChange={() => setSnap(head + key)}
                      className="h-[19px] w-[19px] shrink-0 appearance-none rounded-full border-2 border-[#3c3c3c] bg-white checked:bg-[#323232] checked:shadow-[inset_0_0_0_3px_#fff]"
                    />
                    <span>
                      {head}
                      <u>{key}</u>
                    </span>
                  </label>
                ))}
              </fieldset>
            </div>
            <label className="flex items-center justify-between">
              Part #
              <input
                defaultValue="L5"
                className="h-[30px] w-[73px] border-2 border-[#7a7a7a] bg-white pl-[2px]"
              />
            </label>
          </div>
        </div>
      </div>
      <fieldset className="w-[102px] border-2 border-[#dcdcdc] px-[3px] pt-[3px] pb-[6px]">
        <legend className="ml-[6px] px-[2px] leading-[18px]">Variant</legend>
        <div className="grid grid-cols-[43px_46px] gap-x-[2px] gap-y-[5px]">
          {range(1, 8, 1).flatMap((n) => [
            <button key={`S${n}`} className="h-7 border-2 border-[#adadad] bg-[#e1e1e1] text-[#ff1e1e]">
              {`S${n}`}
            </button>,
            <button
              key={`R${n}`}
              disabled={n > 1}
              onClick={() => setVariant(`R${n}`)}
              className={`h-7 border-2 ${
                variant === `R${n}`
                  ? "border-[#005a9e] bg-[#cce4f7] font-bold text-[#0000ff]"
                  : "border-[#bfbfbf] bg-[#cccccc] text-[#a0a0a0]"
              }`}
            >
              {`R${n}`}
            </button>,
          ])}
        </div>
      </fieldset>
    </div>
  );
}

function CrossoverPage() {
  return (
    <section className="mr-[5px] ml-[6px] flex flex-1 flex-col border border-[#dcdcdc] bg-white p-[3px]">
      <div className="flex-1 bg-[#f0f0f0]">
        <Toolbar />
        <div className="mt-4 ml-[9px] flex">
          <Schematic />
          <div className="flex w-[22px] flex-col">
            <Chevron label="Scroll up" d="M1 9L6 3L11 9" className="h-[21px]" />
            <div className="h-[125px] bg-[#cdcdcd]" />
            <Chevron label="Scroll down" d="M1 3L6 9L11 3" className="mt-auto h-[26px]" />
          </div>
        </div>
        <div className="mt-[1px] mr-[22px] ml-[5px] flex h-[22px]">
          <Chevron label="Scroll left" d="M9 1L3 6L9 11" className="w-[25px]" />
          <div className="w-[176px] bg-[#cdcdcd]" />
          <Chevron label="Scroll right" d="M3 1L9 6L3 11" className="ml-auto w-[26px]" />
        </div>
        <PartEditor />
      </div>
    </section>
  );
}

const field = "h-[30px] border-2 border-[#828282] bg-white text-center";
const spin = "flex h-[31px] items-center justify-center border-2 border-[#b9b9b9] bg-[#e1e1e1]";

function ChartControls() {
  const [splMax, setSplMax] = useState(true);

  return (
    <div className="flex h-12 items-center pb-1 pl-[19px] whitespace-nowrap">
      <label className="flex items-center gap-[9px]">
        Ref angle
        <input defaultValue="0" className={`${field} w-[60px]`} />
      </label>
      <span className="ml-[7px]">deg hor</span>
      <label className="ml-[15px] flex items-center gap-[9px]">
        <Check checked={splMax} onChange={setSplMax} />
        SPL max
      </label>
      <input aria-label="SPL max value" defaultValue="-35" className={`${field} ml-3 w-[60px]`} />
      <button aria-label="Adjust SPL max" className={`${spin} ml-[6px] w-[30px]`}>
        <svg viewBox="0 0 20 24" className="h-6 w-5" fill="#464646">
          <path d="M10 1L19 9V11H1V9ZM10 23L19 15V13H1V15Z" />
        </svg>
      </button>
      <button aria-label="Fit SPL range" className={`${spin} ml-[3px] w-[30px]`}>
        <svg viewBox="0 0 20 24" className="h-6 w-5" fill="#464646">
          <path d="M1 2H19V4L10 12L1 4ZM1 22H19V20L10 12L1 20Z" />
        </svg>
      </button>
      <span className="ml-[14px]">Ovl</span>
      {["Add overlay", "Remove overlay"].map((label, i) => (
        <button
          key={label}
          aria-label={label}
          className={`flex h-[33px] w-[39px] items-center justify-center border-2 border-[#b9b9b9] bg-[#e1e1e1] ${
            i ? "ml-2" : "ml-[10px]"
          }`}
        >
          <svg viewBox="0 3 30 24" className="h-6 w-[30px]">
            <circle cx="15" cy="15" r="15" fill="#32af91" />
            <path d={i ? "M6 15H24" : "M15 6V24M6 15H24"} stroke="#fff" strokeWidth="3" />
          </svg>
        </button>
      ))}
      <input
        aria-label="Overlay name"
        defaultValue="RävL-210-440-ARTA-2022-01-18"
        className="ml-[6px] h-[30px] w-[179px] border-2 border-[#828282] bg-white px-[2px]"
      />
      <input aria-label="Frequency from" defaultValue="100" className={`${field} ml-2 w-[54px]`} />
      <span className="ml-[7px]">...</span>
      <input aria-label="Frequency to" defaultValue="20000" className={`${field} ml-[9px] w-[60px]`} />
      <span className="ml-[7px]">Hz</span>
    </div>
  );
}

function TitleBar() {
  return (
    <header className="flex h-[35px] items-center bg-white font-['Open_Sans',sans-serif] text-[17px] text-black">
      <svg viewBox="0 0 22 18" className="ml-[3px] h-[18px] w-[22px]">
        <path d="M5 0H17L22 6L11 18L0 6Z" fill="#c8141e" />
        <path d="M6 2H16L19 6L11 14L3 6Z" fill="#8c0a14" />
        <path d="M5 5L8 3H11L8 6L11 9L14 6L12 3H15L17 6L11 13Z" fill="#ffdc1e" />
      </svg>
      <h1 className="ml-[6px] whitespace-nowrap">
        {"VituixCAD: C:\\Users\\surf\\Documents\\VituixCAD\\Projects\\RävL-210-440-ARTA-2022-01-18.vxp"}
      </h1>
      <div className="mr-[14px] ml-auto flex gap-[24px]">
        {[
          ["Minimize", "M1 8H16"],
          ["Restore", "M1 5H12V16H1ZM4 5V2H15V13H12"],
          ["Close", "M1 1L16 16M16 1L1 16"],
        ].map(([label, d]) => (
          <button key={label} aria-label={label} className="flex w-[46px] justify-center">
            <svg viewBox="0 0 17 17" className="h-[17px] w-[17px]" fill="none" stroke="#000" strokeWidth="1.2">
              <path d={d} />
            </svg>
          </button>
        ))}
      </div>
    </header>
  );
}

export default function App() {
  return (
    <div className="flex min-h-screen flex-col bg-[#f0f0f0] font-['Liberation_Sans',Arial,sans-serif] text-[16px] leading-5 text-[#1e1e1e]">
      <TitleBar />
      <div className="grid flex-1 grid-cols-[5fr_7fr]">
        <div className="flex min-w-0 flex-col pb-[1px]">
          <div className="flex h-[68px] justify-between">
            <div className="flex w-[587px] flex-col justify-between">
              <nav className="flex h-9 items-center bg-linear-to-r from-[#f0f0f0] to-[#fafafa] pl-[22px] font-['Open_Sans',sans-serif] text-[17px]">
                <div className="flex gap-7">
                  {["File", "View", "Tools", "Options", "Help"].map((m) => (
                    <button key={m}>
                      <u>{m[0]}</u>
                      {m.slice(1)}
                    </button>
                  ))}
                </div>
              </nav>
              <div role="tablist" className="ml-[8px] flex items-end">
                <button role="tab" aria-selected="false" className="h-[27px] w-[65px] border border-b-0 border-[#dcdcdc]">
                  Drivers
                </button>
                <button role="tab" aria-selected="true" className="h-[31px] w-[92px] border border-b-0 border-[#dcdcdc] bg-white pb-1">
                  Crossover
                </button>
                <button role="tab" aria-selected="false" className="h-[27px] w-[58px] border border-b-0 border-[#dcdcdc]">
                  Room
                </button>
              </div>
            </div>
            <div className="flex items-start pt-7 pr-[7px]">
              <input aria-label="Columns" defaultValue="21" className={`${field} w-[45px]`} />
              <input aria-label="Rows" defaultValue="6" className={`${field} ml-[5px] w-[45px]`} />
              <button className="ml-[10px] h-8 w-[42px] border-2 border-[#b9b9b9] bg-[#e1e1e1]">1:1</button>
              <button className="ml-2 h-8 w-[42px] border-2 border-[#b9b9b9] bg-[#e1e1e1]">Fit</button>
            </div>
          </div>
          <CrossoverPage />
        </div>
        <main className="min-w-0">
          <ChartControls />
          <div className="grid grid-cols-2 gap-[9px] pr-[6px] pl-[13px]">
            {CHARTS.map((c) => (
              <Chart key={c.title} {...c} />
            ))}
          </div>
        </main>
      </div>
      <footer className="h-[2px] bg-[#464646]" />
    </div>
  );
}
